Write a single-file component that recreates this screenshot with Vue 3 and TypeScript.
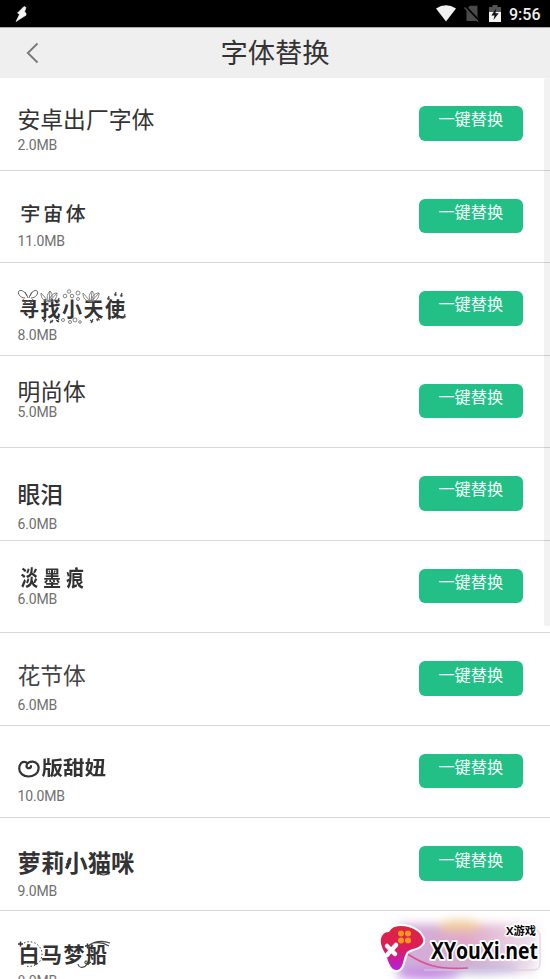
<script setup lang="ts">
interface FontItem {
  name: string
  size: string
  kind: string
  action: boolean
}

const fonts: FontItem[] = [
  { name: '安卓出厂字体', size: '2.0MB', kind: 'stock', action: true },
  { name: '宇宙体', size: '11.0MB', kind: 'cosmos', action: true },
  { name: '寻找小天使', size: '8.0MB', kind: 'angel', action: true },
  { name: '明尚体', size: '5.0MB', kind: 'ming', action: true },
  { name: '眼泪', size: '6.0MB', kind: 'tear', action: true },
  { name: '淡墨痕', size: '6.0MB', kind: 'ink', action: true },
  { name: '花节体', size: '6.0MB', kind: 'flower', action: true },
  { name: '版甜妞', size: '10.0MB', kind: 'sweet', action: true },
  { name: '萝莉小猫咪', size: '9.0MB', kind: 'kitty', action: true },
  { name: '白马梦船', size: '8.0MB', kind: 'dream', action: false },
]
</script>

<template>
  <div class="screen">
    <header class="status">
      <svg class="bolt" width="14" height="18" viewBox="0 0 14 18"><path d="M9 1.500 2.500 8l2 1.500L1 16.500l10-6.300V8L9.500 7l1.500-4.500z" fill="#f4f4f4" stroke="#f4f4f4" stroke-width=".6" /></svg>
      <div class="status-right">
        <svg width="20" height="17" viewBox="0 0 20 17"><path d="M0 3.500Q10-3 20 3.500L10 16.500z" fill="#f1f1f1" /></svg>
        <svg class="sim" width="16" height="17" viewBox="0 0 16 17"><path d="M2.500 4.500 6 .8h7.500V16h-11z" fill="#4a4a4a" /><path d="M1.500 1.500 15 15.500" stroke="#000" stroke-width="2" /><path d="M.5 2.500 14 16.500" stroke="#4a4a4a" stroke-width="1.500" /></svg>
        <svg class="battery" width="12" height="18" viewBox="0 0 12 18"><path d="M0 2h3.500V0h5v2H12v6H0z" fill="#555" /><path d="M0 7h12v10H0z" fill="#f1f1f1" /><path d="M7.200 3.500 2.300 10.500h3.200l-1 4.500 5.200-6.700H6.500z" fill="#111" /></svg>
        <span class="clock">9:56</span>
      </div>
    </header>
    <nav class="titlebar">
      <svg class="back" width="14" height="22" viewBox="0 0 14 22"><path d="M11.500 1.500 1.800 11l9.700 9.500" fill="none" stroke="#777" stroke-width="1.800" /></svg>
      <h1>字体替换</h1>
    </nav>
    <main class="list">
      <section v-for="f in fonts" :key="f.kind" class="row" :class="f.kind">
        <div class="info">
          <div class="name">
            <svg v-if="f.kind === 'sweet'" class="heart" width="22" height="18" viewBox="0 0 22 18">
              <path d="M13 6C13 9 8.500 9 8.500 6C8.500 3 12 1.300 15 1.600C19 2 21 5.500 20.500 9C20 14 15 16.500 10.500 16.500C5 16.500 1.200 13 1.200 8.500C1.200 3.500 4.500 1 8 2.300" fill="none" stroke="#333" stroke-width="2.200" stroke-linecap="round" />
            </svg>
            <span class="label">{{ f.name }}</span>
            <svg v-if="f.kind === 'angel'" class="ornament" width="110" height="40" viewBox="0 0 110 40" fill="none" stroke="#777" stroke-width=".9">
              <path d="M10 9C8 3 3 0 1 2s1 7 6 7m4 0c2-6 6-9 8-7s-1 7-6 7M9 7 7 3m5 4 2-4M5 10l2 4 3-3 3 3 2-4" stroke="#555" />
              <path d="M31 13 23 4m8 9 1-11m-1 11 8-9M23 4c0 5 2 8 8 9M32 2c-4 4-3 8-1 11 4-4 4-8 1-11m7 2c-5 0-7 4-8 9 6-1 8-4 8-9" />
              <path d="m73 13-8-9m8 9 1-11m-1 11 8-9M65 4c0 5 2 8 8 9m1-11c-4 4-3 8-1 11 4-4 4-8 1-11m7 2c-5 0-7 4-8 9 6-1 8-4 8-9" />
              <g><circle cx="47" cy="7" r="1.800" /><circle cx="51" cy="2.500" r="1.700" /><circle cx="54" cy="7" r="1.800" /><circle cx="60" cy="4" r="2" /><circle cx="60" cy="10" r="1.500" /><circle cx="45" cy="31" r="1.500" /><circle cx="52" cy="33" r="1.500" /><circle cx="57" cy="31" r="2" /><circle cx="62" cy="33" r="1.300" /></g>
              <path stroke="#444" stroke-width="1.200" d="m25 30 3 2m0-2-2 3m6-1 3 1m0-2-3 3m6-3 3 2m0-3-2 3m0-22 3 1m-1-3-1 4m32 18 3 2m0-3-2 4m5-4 4 1m-1-3-2 4m10-23 3 1m-1-3-1 4m6-6 3 1m-1-3-1 4m5-1 3 1m-1-3-1 4m-13 21 3 1m0-3-2 4m7-3 3 1m0-3-2 4m6-3 3 1m-1-3-1 4" />
            </svg>
            <svg v-if="f.kind === 'kitty'" class="ornament" width="120" height="30" viewBox="0 0 120 30" fill="none" stroke="#333" stroke-width="1.200">
              <path d="M49 9h1m2 2h1m-4 5h1m-2-4h1" stroke-width="1.600" />
              <path d="M80 20q5 6 12 0" />
            </svg>
            <svg v-if="f.kind === 'dream'" class="ornament" width="100" height="32" viewBox="0 0 100 32" fill="none" stroke="#444">
              <path d="M6 4C14 0 24 6 24 15S16 29 7 27" stroke-dasharray="1.500 2" /><path d="M0 5h5M2.500 2.500v5M67 7h5m-2.500-2.500v5" stroke="#333" stroke-width="1.500" />
              <path d="M69 8C75 2 84 1 92 4M76 4c5-1 10 0 15 3M60 25c1 5 7 4 9 0 1-3-1-4-2-2s3 3 6 0" stroke-width="1.100" />
            </svg>
          </div>
          <div class="size">{{ f.size }}</div>
        </div>
        <button v-if="f.action" class="replace" type="button">一键替换</button>
      </section>
    </main>
    <div class="scrollbar"></div>
    <div class="watermark">
      <svg width="185" height="69" viewBox="365 910 185 69">
        <defs>
          <filter id="haze" x="-20%" y="-30%" width="140%" height="160%"><feGaussianBlur stdDeviation="5" /></filter>
          <linearGradient id="pad" x1="0" y1="0" x2="0" y2="1"><stop offset="0" stop-color="#dc2541" /><stop offset=".5" stop-color="#dc1d58" /><stop offset="1" stop-color="#b51ee3" /></linearGradient>
          <linearGradient id="cloud"><stop offset="0" stop-color="#ceb0de" /><stop offset=".5" stop-color="#dfa7c8" /><stop offset="1" stop-color="#ede5f1" /></linearGradient>
        </defs>
        <g filter="url(#haze)">
          <rect x="397" y="924" width="140" height="49" rx="6" fill="url(#cloud)" />
          <ellipse cx="460" cy="926" rx="22" ry="6" fill="#f0ca9c" /><ellipse cx="428" cy="974" rx="32" ry="6" fill="#c48ae6" /><ellipse cx="480" cy="969" rx="40" ry="5" fill="#bdb4dc" />
        </g>
        <path d="M424 970h111q5-1 5-7v-27q0-6-6-6" fill="none" stroke="#d8ccdf" />
        <path d="M406 953c18 12 32 17 62 15" fill="none" stroke="#d95491" stroke-width="1.600" />
        <path d="M382 936Q384 932 389 932Q392 926 400 926q10 0 17 5c5 3 8 10 5 13-3 5-11 4-15 8-4 5-3 17-10 18-7 1-9-11-12-17-3-5-6-12-3-17z" fill="url(#pad)" stroke="#fff" stroke-width="4" stroke-linejoin="round" paint-order="stroke" />
        <path d="m387 946 8 8m1-9-9 10" stroke="#fff" stroke-width="4.500" stroke-linecap="round" />
        <g fill="#ff971b"><circle cx="401" cy="933.500" r="3" /><circle cx="408" cy="933.500" r="3" /><circle cx="401" cy="940.500" r="3" /><circle cx="408" cy="940.500" r="3" /></g>
        <text class="mark-main" x="431" y="959" textLength="107" lengthAdjust="spacingAndGlyphs">XYouXi.net</text>
        <text class="mark-small" x="506" y="935" textLength="30" lengthAdjust="spacingAndGlyphs">X游戏</text>
      </svg>
    </div>
  </div>
</template>

<style>
body { background: #fff; overflow: hidden; }
</style>

<style scoped>
.screen { position: relative; width: 550px; height: 979px; overflow: hidden; background: #fff; font-family: Roboto, "Noto Sans CJK SC", sans-serif; color: #333; }
.status { box-sizing: border-box; height: 27px; background: #000; display: flex; justify-content: space-between; padding: 5px 10px 0 15px; }
.bolt { display: block; }
.status-right { display: flex; align-items: flex-start; }
.status-right > svg:first-child { margin-right: 1px; }
.sim { margin-left: 7px; }
.battery { margin-left: 9px; }
.clock { width: 31px; margin-left: 8px; font-size: 16px; font-weight: 500; line-height: 19px; color: #eee; white-space: nowrap; }
.titlebar { box-sizing: border-box; height: 51px; border-top: 1px solid #aaa; background: #efefef; display: grid; grid-template-columns: 60px 1fr 60px; align-items: center; }
.back { margin-left: 26px; }
h1 { margin: 0; padding-top: 2px; text-align: center; font-size: 27.300px; line-height: 48px; font-weight: 400; }
.row { box-sizing: border-box; height: 92.550px; padding: 0 27px 0 17.500px; border-bottom: 1px solid #d7d7d7; display: flex; justify-content: space-between; align-items: flex-start; }
.info { padding-top: var(--top); }
.name { position: relative; height: 24px; display: flex; align-items: center; font-size: 22.800px; line-height: 24px; white-space: nowrap; }
.label { display: block; transform-origin: left center; }
.size { margin-top: var(--gap); font-size: 14px; letter-spacing: -.15px; line-height: 16px; color: #707070; }
.replace { width: 104.500px; height: 34.500px; margin: 28px 0 0; padding: 0 0 10px; border: 0; border-radius: 6px; background: #22bf86; color: #f5fffa; font-family: "Noto Sans CJK SC", sans-serif; font-size: 16.200px; line-height: 24px; font-weight: 400; white-space: nowrap; }
.ornament { position: absolute; left: 0; top: 0; overflow: visible; }
.stock { --top: 31px; --gap: 4px; }
.cosmos { --top: 31.500px; --gap: 6.500px; }
.cosmos .label { padding-left: 2px; font-size: 20px; letter-spacing: 2.800px; transform: skewX(-3deg); font-weight: 500; }
.angel { --top: 35px; --gap: 5px; }
.angel .label { padding-left: 1.500px; font-size: 20px; letter-spacing: 1.500px; font-weight: 700; }
.angel .ornament { top: -9px; }
.ming { --top: 25.500px; --gap: -1px; }
.tear { --top: 35.500px; --gap: 8px; }
.tear .label { font-weight: 500; }
.ink { --top: 26px; --gap: 0px; }
.ink .label { padding-left: 3px; font-size: 22px; letter-spacing: 6.700px; font-weight: 700; transform: scaleX(.8); }
.flower { --top: 32px; --gap: 8px; }
.flower .label { font-weight: 400; color: #444; }
.sweet { --top: 31px; --gap: 7px; }
.heart { margin-right: 2px; }
.sweet .label { font-size: 21.500px; font-weight: 700; transform: scaleY(.9); }
.kitty { --top: 34px; --gap: 7px; }
.kitty .label { font-size: 23.400px; font-weight: 700; }
.dream { --top: 32px; --gap: 6px; }
.dream .label { padding-left: 1px; font-size: 21px; letter-spacing: 1.500px; font-weight: 700; }
.dream .ornament { top: -4px; }
.scrollbar { position: absolute; right: 0; top: 78px; width: 6px; height: 548px; border-radius: 2px; background: rgba(0, 0, 0, .05); }
.watermark { position: absolute; left: 365px; top: 910px; width: 185px; height: 69px; overflow: hidden; }
.watermark svg { display: block; }
.mark-main { font: 700 24px "Open Sans", "Noto Sans", sans-serif; fill: #050505; stroke: #fff; stroke-width: 4px; paint-order: stroke; stroke-linejoin: round; }
.mark-small { font: 700 11px "Open Sans", "Noto Sans CJK SC", sans-serif; fill: #050505; stroke: #fff; stroke-width: 3px; paint-order: stroke; stroke-linejoin: round; }
</style>
